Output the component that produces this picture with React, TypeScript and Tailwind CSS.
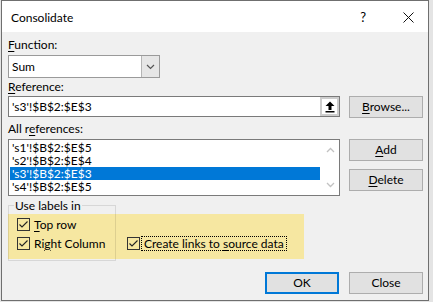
import React from "react";

function Check({ checked = true }: { checked?: boolean }) {
  return (
    <div className="w-[13px] h-[13px] border border-[#333] flex items-center justify-center shrink-0">
      {checked && (
        <svg width="11" height="11" viewBox="0 0 11 11">
          <polyline points="1.5,5.5 4,8 9.5,2.5" fill="none" stroke="#222" strokeWidth="1.1" />
        </svg>
      )}
    </div>
  );
}

function Btn({ children, primary = false }: { children: React.ReactNode; primary?: boolean }) {
  return (
    <div
      className={
        "w-[74px] h-[22px] bg-[#e1e1e1] flex items-center justify-center " +
        (primary ? "border-2 border-[#0078d7]" : "border border-[#adadad]")
      }
    >
      {children}
    </div>
  );
}

export default function App() {
  const items = ["'s1'!$B$2:$E$5", "'s2'!$B$2:$E$4", "'s3'!$B$2:$E$3", "'s4'!$B$2:$E$5"];
  return (
    <div className="w-[433px] h-[302px] bg-[#e4e4e4] pl-px font-['Lato',sans-serif] text-[12px] leading-[16px] text-black">
      <div className="w-[428px] h-[301px] border border-[#6f6f6f] bg-[#f0f0f0] flex flex-col">
        {/* title bar */}
        <div className="h-[31px] bg-white flex items-center pl-[9px] shrink-0">
          <span className="text-[12px] mt-[2px]">Consolidate</span>
          <span className="ml-auto mt-[1px] text-[13px]">?</span>
          <div className="ml-[37px] mr-[14px] mt-[1px]">
            <svg width="11" height="11" viewBox="0 0 11 11">
              <path d="M0.5 0.5 L10.5 10.5 M10.5 0.5 L0.5 10.5" stroke="#111" strokeWidth="1" />
            </svg>
          </div>
        </div>

        {/* body */}
        <div className="pl-[6px] pr-[5px] flex flex-col">
          <div className="mt-[5px] h-[16px]">
            <span className="underline underline-offset-2">F</span>unction:
          </div>
          <div className="mt-[2px] w-[152px] h-[23px] border border-[#9a9a9a] bg-white flex">
            <div className="flex-1 flex items-center pl-[3px]">Sum</div>
            <div className="w-[18px] h-full border-l border-[#b5b5b5] bg-[#e6e6e6] flex items-center justify-center">
              <svg width="9" height="6" viewBox="0 0 9 6">
                <polyline points="1,1 4.5,4.5 8,1" fill="none" stroke="#555" strokeWidth="1.2" />
              </svg>
            </div>
          </div>

          <div className="mt-[1px] h-[16px]">
            <span className="underline underline-offset-2">R</span>eference:
          </div>
          <div className="mt-[1px] flex justify-between">
            <div className="w-[332px] h-[21px] border border-[#7a7a7a] bg-white flex">
              <div className="flex-1 flex items-center pl-[3px]">'s3'!$B$2:$E$3</div>
              <div className="w-[19px] h-full border-2 border-[#cdcdcd] bg-white flex items-center justify-center">
                <svg width="10" height="12" viewBox="0 0 10 12">
                  <path d="M5 0.5 L9.5 5 H6.5 V9 H3.5 V5 H0.5 Z" fill="#000" />
                  <rect x="0.5" y="10" width="9" height="1.5" fill="#000" />
                </svg>
              </div>
            </div>
            <Btn>
              <span>
                <span className="underline underline-offset-2">B</span>rowse...
              </span>
            </Btn>
          </div>

          <div className="mt-[3px] h-[16px]">
            All r<span className="underline underline-offset-2">e</span>ferences:
          </div>
          <div className="mt-[2px] flex justify-between">
            <div className="w-[332px] h-[57px] border border-[#7a7a7a] bg-white flex">
              <div className="w-[312px] p-px flex flex-col">
                {items.map((t, i) => (
                  <div
                    key={t}
                    className={
                      "h-[13px] leading-[13px] pl-[2px] " +
                      (i === 2 ? "bg-[#0078d7] text-white" : "")
                    }
                  >
                    {t}
                  </div>
                ))}
              </div>
              <div className="flex-1 flex flex-col justify-between items-center py-[7px]">
                <svg width="9" height="6" viewBox="0 0 9 6">
                  <polyline points="1,5 4.5,1.5 8,5" fill="none" stroke="#c2c2c2" strokeWidth="1.3" />
                </svg>
                <svg width="9" height="6" viewBox="0 0 9 6">
                  <polyline points="1,1 4.5,4.5 8,1" fill="none" stroke="#c2c2c2" strokeWidth="1.3" />
                </svg>
              </div>
            </div>
            <div className="flex flex-col gap-[8px]">
              <Btn>
                <span>
                  <span className="underline underline-offset-2">A</span>dd
                </span>
              </Btn>
              <Btn>
                <span>
                  <span className="underline underline-offset-2">D</span>elete
                </span>
              </Btn>
            </div>
          </div>

          {/* group */}
          <div className="relative mt-[1px] h-[64px]">
            <div className="relative h-[17px] pl-[6px] pt-[1px] z-10">
              <span className="bg-[#f0f0f0] px-px">Use labels in</span>
            </div>
            <div className="w-[296px] h-[45px] bg-[#f6e7a1] pt-px pl-[9px] flex flex-col">
              <div className="h-[19px] flex items-center">
                <Check />
                <span className="ml-[4px]">
                  <span className="underline underline-offset-2">T</span>op row
                </span>
              </div>
              <div className="h-[19px] flex items-center">
                <div className="w-[110px] flex items-center">
                  <Check />
                  <span className="ml-[4px]">
                    Ri<span className="underline underline-offset-2">g</span>ht Column
                  </span>
                </div>
                <Check />
                <span className="ml-px border border-dotted border-black px-[2px] leading-[13px]">
                  Create links to <span className="underline underline-offset-2">s</span>ource data
                </span>
              </div>
            </div>
            <div className="absolute left-0 top-[8px] w-[108px] h-[56px] border border-black/10 pointer-events-none" />
          </div>

          <div className="mt-[11px] flex justify-end gap-[10px]">
            <Btn primary>OK</Btn>
            <Btn>Close</Btn>
          </div>
        </div>
      </div>
    </div>
  );
}
